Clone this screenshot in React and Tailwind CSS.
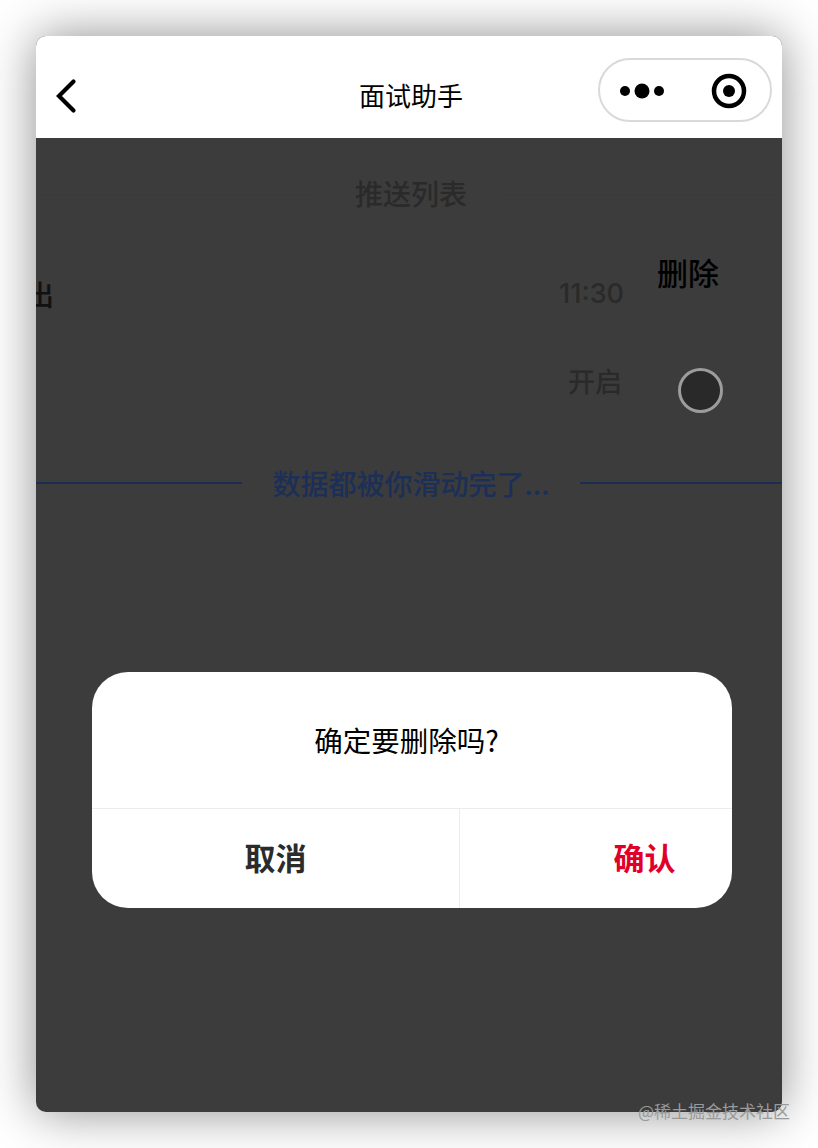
const font = { fontFamily: '"Noto Sans CJK SC", "Liberation Sans", sans-serif' };

function Back() {
  return (
    <svg width="26" height="38" viewBox="0 0 26 38" fill="none" className="mt-[1px] block">
      <path d="M20.5 4.5 L6 19 L20.5 33.5" stroke="#000" strokeWidth="4.2" strokeLinecap="round" strokeLinejoin="miter" />
    </svg>
  );
}

function Capsule() {
  return (
    <div className="flex h-[64px] w-[174px] items-center rounded-full border-2 border-[#d9d9d9] bg-white pb-[1px]">
      <svg width="174" height="60" viewBox="0 0 174 60" fill="none" className="block shrink-0 -ml-[2px]">
        <circle cx="27" cy="31" r="5" fill="#000" />
        <circle cx="44" cy="31" r="7.5" fill="#000" />
        <circle cx="61" cy="31" r="5" fill="#000" />
        <circle cx="131" cy="31" r="15" stroke="#000" strokeWidth="4.5" />
        <circle cx="131" cy="31" r="6" fill="#000" />
      </svg>
    </div>
  );
}

export default function App() {
  return (
    <div className="relative h-[1148px] w-[818px] overflow-hidden bg-white pl-[36px] pt-[36px]" style={font}>
      <div className="flex h-[1076px] w-[746px] flex-col overflow-hidden rounded-[10px] bg-[#3c3c3c] shadow-[0_0_50px_rgba(0,0,0,0.45)]">
        <header className="grid h-[102px] shrink-0 grid-cols-[1fr_auto_1fr] items-center bg-white pt-[16px]">
          <div className="pl-[17px]"><Back /></div>
          <div className="ml-[4px] text-[26px] leading-[36px] text-black">面试助手</div>
          <div className="flex justify-end pb-[10px] pr-[10px]"><Capsule /></div>
        </header>

        <main className="relative flex-1 overflow-hidden">
          <div className="flex h-[112px] items-center">
            <div className="h-[1px] flex-1 bg-[#3a3a3a]" />
            <div className="ml-[4px] px-[34px] pb-[2px] text-[28px] font-medium leading-[40px] text-[#2a2a2a]">推送列表</div>
            <div className="h-[1px] flex-1 bg-[#3a3a3a]" />
          </div>

          <div className="flex h-[88px] items-center pr-[63px] text-[28px]">
            <div className="-ml-[10px] pb-[1px] font-medium leading-[40px] text-[#111]">出</div>
            <div className="ml-auto text-[27px] font-medium leading-[40px] text-[#2a2a2a]" style={{ fontFamily: 'Inter, "Noto Sans CJK SC", sans-serif' }}>11:30</div>
            <div className="ml-[33px] self-start pb-[2px] text-[31px] font-medium leading-[44px] text-black">删除</div>
          </div>

          <div className="flex h-[125px] items-start justify-end pr-[59px]">
            <div className="mt-[23px] text-[27px] font-medium leading-[40px] text-[#2a2a2a]">开启</div>
            <div className="ml-[56px] mt-[30px] h-[45px] w-[45px] rounded-full border-[3px] border-[#9c9c9c] bg-[#292929]" />
          </div>

          <div className="flex h-[40px] items-center">
            <div className="h-[2px] w-[206px] bg-[#1b2d50]" />
            <div className="flex-1 pb-[1px] text-center text-[28px] font-medium leading-[40px] text-[#1b2f58]">数据都被你滑动完了...</div>
            <div className="h-[2px] w-[202px] bg-[#1b2d50]" />
          </div>

          <div className="absolute left-[56px] top-[534px] flex h-[236px] w-[640px] flex-col overflow-hidden rounded-[36px] bg-white">
            <div className="flex h-[136px] shrink-0 items-center justify-center pb-[1px] pr-[11px] text-[28.5px] leading-[40px] text-black">确定要删除吗?</div>
            <div className="flex h-[100px] border-t border-[#ececec]">
              <div className="flex w-[368px] shrink-0 items-center justify-center border-r border-[#ececec] pb-[3px] text-[31px] font-bold text-[#2b2b2b]">取消</div>
              <div className="flex w-[368px] shrink-0 items-center justify-center pb-[3px] pl-[1px] text-[31px] font-bold text-[#e0002a]">确认</div>
            </div>
          </div>
        </main>
      </div>

      <div className="absolute left-[638px] top-[1099px] text-[17px] leading-[24px] text-[#9a9a9a]">@稀土掘金技术社区</div>
    </div>
  );
}
